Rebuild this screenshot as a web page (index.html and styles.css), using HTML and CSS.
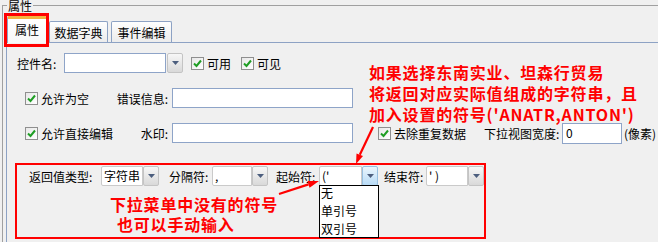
FILE: index.html
```html
<!DOCTYPE html>
<html>
<head>
<meta charset="utf-8">
<link rel="stylesheet" href="styles.css">
</head>
<body>
<fieldset class="group">
  <legend class="group-title">属性</legend>
  <div class="tabs">
    <div class="tab tab-active">属性</div>
    <div class="tab tab-data">数据字典</div>
    <div class="tab tab-event">事件编辑</div>
  </div>
  <div class="panel">
    <div class="row row1">
      <span class="lbl lbl-name">控件名:</span>
      <span class="input input-name"></span>
      <span class="dd-btn"><svg width="7" height="4" viewBox="0 0 7 4"><polygon points="0,0 7,0 3.5,4" fill="#4c5e7e"/></svg></span>
      <span class="chk-item chk-usable"><span class="chk"><svg width="11" height="11" viewBox="0 0 11 11"><polyline points="2,5.5 4.5,8 9,2.5" fill="none" stroke="#1f9e24" stroke-width="2"/></svg></span>可用</span>
      <span class="chk-item chk-visible"><span class="chk"><svg width="11" height="11" viewBox="0 0 11 11"><polyline points="2,5.5 4.5,8 9,2.5" fill="none" stroke="#1f9e24" stroke-width="2"/></svg></span>可见</span>
    </div>
    <div class="row row2">
      <span class="chk-item chk-col"><span class="chk"><svg width="11" height="11" viewBox="0 0 11 11"><polyline points="2,5.5 4.5,8 9,2.5" fill="none" stroke="#1f9e24" stroke-width="2"/></svg></span>允许为空</span>
      <span class="lbl lbl-right">错误信息:</span>
      <span class="input input-wide"></span>
    </div>
    <div class="row row3">
      <span class="chk-item chk-col"><span class="chk"><svg width="11" height="11" viewBox="0 0 11 11"><polyline points="2,5.5 4.5,8 9,2.5" fill="none" stroke="#1f9e24" stroke-width="2"/></svg></span>允许直接编辑</span>
      <span class="lbl lbl-right">水印:</span>
      <span class="input input-wide"></span>
      <span class="chk-item chk-dedupe"><span class="chk"><svg width="11" height="11" viewBox="0 0 11 11"><polyline points="2,5.5 4.5,8 9,2.5" fill="none" stroke="#1f9e24" stroke-width="2"/></svg></span>去除重复数据</span>
      <span class="lbl lbl-viewwidth">下拉视图宽度:</span>
      <span class="input input-width">0</span>
      <span class="lbl lbl-px">(像素)</span>
    </div>
    <div class="return-box">
      <div class="row combos">
        <span class="lbl lbl-c1">返回值类型:</span>
        <span class="combo combo1"><span class="combo-text">字符串</span><span class="combo-btn"><svg width="7" height="4" viewBox="0 0 7 4"><polygon points="0,0 7,0 3.5,4" fill="#4c5e7e"/></svg></span></span>
        <span class="lbl lbl-c2">分隔符:</span>
        <span class="combo combo2"><span class="combo-text">,</span><span class="combo-btn"><svg width="7" height="4" viewBox="0 0 7 4"><polygon points="0,0 7,0 3.5,4" fill="#4c5e7e"/></svg></span></span>
        <span class="lbl lbl-c3">起始符:</span>
        <span class="combo combo3"><span class="combo-text">('</span><span class="combo-btn combo-btn-hot"><svg width="7" height="4" viewBox="0 0 7 4"><polygon points="0,0 7,0 3.5,4" fill="#4c5e7e"/></svg></span>
          <ul class="dropdown">
            <li>无</li>
            <li>单引号</li>
            <li>双引号</li>
          </ul>
        </span>
        <span class="lbl lbl-c4">结束符:</span>
        <span class="combo combo4"><span class="combo-text">' )</span><span class="combo-btn"><svg width="7" height="4" viewBox="0 0 7 4"><polygon points="0,0 7,0 3.5,4" fill="#4c5e7e"/></svg></span></span>
      </div>
      <div class="note-bottom">
        <div>下拉菜单中没有的符号</div>
        <div class="note-indent">也可以手动输入</div>
      </div>
    </div>
  </div>
</fieldset>
<div class="note-top">
  <div>如果选择东南实业、坦森行贸易</div>
  <div>将返回对应实际值组成的字符串，且</div>
  <div>加入设置的符号('ANATR,ANTON')</div>
</div>
<div class="tab-mark"></div>
<svg class="arrows" width="658" height="242" viewBox="0 0 658 242">
  <line x1="373" y1="127" x2="359.8" y2="154.7" stroke="#ff0000" stroke-width="2.2"/>
  <polygon points="356,164 363,156 356.5,153.4" fill="#ff0000"/>
  <line x1="279" y1="194" x2="308.5" y2="184.4" stroke="#ff0000" stroke-width="2.2"/>
  <polygon points="319,181 309.6,187.7 307.4,181.1" fill="#ff0000"/>
</svg>
</body>
</html>
```

FILE: styles.css
```css
* { box-sizing: border-box; }
html, body { margin: 0; padding: 0; }
body {
  width: 658px;
  height: 242px;
  overflow: hidden;
  position: relative;
  background: #f0f0f0;
  font-family: "Noto Sans CJK SC", sans-serif;
  font-size: 12px;
  color: #000;
}
.group {
  margin: -3px 0 0 2px;
  padding: 0 0 0 3px;
  border: 1px solid #a0a0a0;
  border-right: 0;
  border-bottom: 0;
  min-inline-size: 0;
  height: 245px;
}
.group-title {
  margin-left: 1px;
  padding: 0 1px;
  line-height: 17px;
}
.tabs {
  display: flex;
  align-items: flex-end;
  height: 28px;
  padding-top: 2px;
  margin-left: 1px;
  position: relative;
  z-index: 1;
}
.tab {
  height: 21px;
  border: 1px solid #8da2c4;
  border-bottom: 0;
  border-radius: 2px 2px 0 0;
  background: linear-gradient(#fefefe, #ececec);
  display: flex;
  align-items: center;
  justify-content: center;
}
.tab-active {
  width: 40px;
  height: 27px;
  margin-bottom: -1px;
  border-top: 3px solid #f4b33f;
  background: linear-gradient(#ffffff, #f8f8f8);
  padding-bottom: 4px;
}
.tab-data { width: 59px; margin-left: 2px; }
.tab-event { width: 61px; margin-left: 3px; }
.panel {
  border-top: 1px solid #8da2c4;
  border-left: 1px solid #8da2c4;
  height: 200px;
  padding-top: 10px;
}
.row {
  display: flex;
  align-items: center;
  height: 20px;
  white-space: nowrap;
}
.row > * { flex-shrink: 0; }
.row1 { margin-left: 10px; }
.row2 { margin-top: 15px; margin-left: 18px; }
.row3 { margin-top: 15px; margin-left: 18px; }
.lbl { display: block; }
.lbl-name { width: 47px; }
.input {
  display: block;
  height: 20px;
  background: #fff;
  border: 1px solid #8ea4c8;
  padding-left: 3px;
  line-height: 18px;
}
.input-name { width: 102px; }
.input-wide { width: 181px; margin-left: 4px; }
.input-width { width: 60px; margin-left: 2px; height: 21px; }
.dd-btn {
  width: 16px;
  height: 20px;
  margin-left: 1px;
  border: 1px solid #c4c4c4;
  border-radius: 2px;
  background: linear-gradient(#f7f7f7, #d9d9d9);
  display: flex;
  align-items: center;
  justify-content: center;
}
.chk-item {
  display: flex;
  align-items: center;
  gap: 3px;
}
.chk {
  width: 13px;
  height: 13px;
  border: 1px solid #8f8f8f;
  background: linear-gradient(135deg, #e8e8e8, #ffffff);
  display: flex;
  align-items: center;
  justify-content: center;
}
.chk-usable { margin-left: 8px; }
.chk-visible { margin-left: 10px; }
.chk-col { width: 88px; }
.lbl-right { width: 55px; text-align: right; }
.chk-dedupe { margin-left: 25px; }
.lbl-viewwidth { margin-left: 18px; width: 76px; }
.lbl-px { margin-left: 2px; }
.return-box {
  margin-top: 20px;
  margin-left: 8px;
  width: 471px;
  height: 76px;
  border: 2px solid #ff0000;
}
.combos { margin-top: 1px; padding-left: 12px; }
.combo {
  display: flex;
  height: 20px;
  position: relative;
}
.combo-text {
  display: block;
  background: #fff;
  border: 1px solid #cacaca;
  border-radius: 2px 0 0 2px;
  padding-left: 2px;
  line-height: 18px;
  height: 20px;
}
.combo-btn {
  width: 16px;
  height: 20px;
  border: 1px solid #c4c4c4;
  border-radius: 2px;
  background: linear-gradient(#f7f7f7, #d9d9d9);
  display: flex;
  align-items: center;
  justify-content: center;
}
.combo-btn-hot {
  border-color: #97bfe0;
  background: linear-gradient(#eaf5fd, #b8dbf6);
}
.lbl-c1 { width: 72px; }
.combo1 .combo-text { width: 42px; }
.lbl-c2 { margin-left: 10px; width: 43px; }
.combo2 .combo-text { width: 40px; }
.lbl-c3 { margin-left: 8px; width: 43px; }
.combo3 .combo-text { width: 43px; }
.lbl-c4 { margin-left: 6px; width: 42px; }
.combo4 .combo-text { width: 42px; }
.dropdown {
  position: absolute;
  left: 0;
  top: 19px;
  width: 60px;
  height: 53px;
  margin: 0;
  padding: 0;
  list-style: none;
  background: #fff;
  border: 1px solid #000;
  z-index: 2;
}
.dropdown li {
  line-height: 14px;
  padding-bottom: 4px;
  padding-left: 1px;
}
.note-bottom,
.note-top {
  color: #ff0000;
  font-family: "Noto Sans CJK SC", sans-serif;
  font-size: 16px;
  font-weight: 700;
  letter-spacing: 0.8px;
  white-space: nowrap;
}
.note-bottom {
  margin-top: 8px;
  margin-left: 93px;
  line-height: 20px;
}
.note-indent { padding-left: 7px; }
.note-top {
  position: absolute;
  left: 369px;
  top: 62px;
  line-height: 21px;
}
.tab-mark {
  position: absolute;
  left: 4px;
  top: 13px;
  width: 45px;
  height: 34px;
  border: 3px solid #ff0000;
  z-index: 3;
}
.arrows {
  position: absolute;
  left: 0;
  top: 0;
  pointer-events: none;
  z-index: 4;
}
```
